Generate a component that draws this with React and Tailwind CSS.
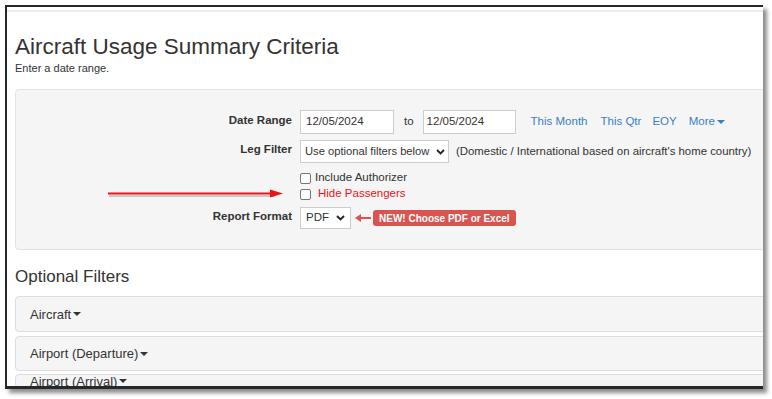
import React from 'react';

const font = { fontFamily: '"Liberation Sans", Arial, Helvetica, sans-serif' };

function Chevron() {
  return (
    <svg width="9" height="6" viewBox="0 0 9 6" className="shrink-0">
      <polyline points="1,1 4.5,4.5 8,1" fill="none" stroke="#222" strokeWidth="1.8" />
    </svg>
  );
}

function Caret() {
  return (
    <svg width="8" height="4" viewBox="0 0 8 4" className="inline-block ml-[2px]">
      <polygon points="0,0 8,0 4,4" fill="currentColor" />
    </svg>
  );
}

function Check({ label, red }) {
  return (
    <div className="flex items-center h-[16px]">
      <span className="w-[11px] h-[11px] border border-[#767676] rounded-[2px] bg-white" />
      <span className={red ? 'ml-[7px] text-[#e8141b]' : 'ml-[4px] text-[#333]'}>{label}</span>
    </div>
  );
}

function Row({ label, children, className = '' }) {
  return (
    <div className={`flex items-center ${className}`}>
      <div className="w-[284px] pr-[8px] text-right font-bold text-[#333] -mt-[3px]">{label}</div>
      <div className="flex items-center h-full">{children}</div>
    </div>
  );
}

function Panel({ title, className = '' }) {
  return (
    <div className={`w-[800px] bg-[#f5f5f5] border border-[#dddddd] rounded-[4px] pl-[14px] flex items-center text-[13px] leading-none text-[#333] ${className}`}>
      {title}
      <Caret />
    </div>
  );
}

export default function App() {
  return (
    <div className="w-[772px] h-[399px] bg-white relative overflow-hidden" style={font}>
      <div className="absolute left-[5px] top-[5px] w-[758px] h-[384px] border-t-2 border-l-2 border-b-[3px] border-[#26282b] bg-white overflow-hidden shadow-[4px_4px_4px_rgba(0,0,0,0.45)]">
        <div className="mt-[3px] h-[2px] bg-[#ebebeb]" />
        <div className="pl-[8px]">
          <h1 className="mt-[22px] text-[22.5px] leading-[26px] text-[#333]">Aircraft Usage Summary Criteria</h1>
          <p className="mt-[2px] text-[11px] leading-[13px] text-[#333]">Enter a date range.</p>

          {/* criteria well */}
          <div className="mt-[14px] w-[800px] bg-[#f5f5f5] border border-[#e3e3e3] rounded-[4px] pt-[20px] pb-[20px] text-[11.5px]">
            <Row label="Date Range" className="h-[24px]">
              <div className="w-[94px] h-[24px] bg-white border border-[#cccccc] flex items-center pl-[5px] text-[#333]">12/05/2024</div>
              <span className="ml-[10px] text-[#333]">to</span>
              <div className="ml-[9px] w-[93px] h-[24px] bg-white border border-[#cccccc] flex items-center pl-[3px] text-[#333]">12/05/2024</div>
              <span className="ml-[15px] text-[#3a7fc4]">This Month</span>
              <span className="ml-[13px] text-[#3a7fc4]">This Qtr</span>
              <span className="ml-[11px] text-[#3a7fc4]">EOY</span>
              <span className="ml-[12px] text-[#3a7fc4] flex items-center">More<Caret /></span>
            </Row>
            <Row label="Leg Filter" className="h-[23px] mt-[6px]">
              <div className="w-[149px] h-[23px] bg-white border border-[#cccccc] flex items-center justify-between pl-[4px] pr-[3px] text-[11.2px] text-[#333]">
                Use optional filters below
                <Chevron />
              </div>
              <span className="ml-[7px] text-[11.4px] text-[#333]">(Domestic / International based on aircraft's home country)</span>
            </Row>
            <div className="pl-[284px] mt-[7px]">
              <Check label="Include Authorizer" />
              <Check label="Hide Passengers" red />
            </div>
            <Row label="Report Format" className="h-[22px] mt-[5px]">
              <div className="w-[51px] h-[22px] bg-white border border-[#cccccc] flex items-center justify-between pl-[5px] pr-[5px] text-[#333]">
                PDF
                <Chevron />
              </div>
              <svg width="16" height="8" viewBox="0 0 16 8" className="ml-[4px]">
                <polygon points="0,4 6,0 6,8" fill="#d9534f" />
                <rect x="5" y="3" width="11" height="2" fill="#d9534f" />
              </svg>
              <span className="ml-[2px] h-[16px] px-[6px] rounded-[3px] bg-[#d9534f] text-white font-bold text-[10px] flex items-center">
                NEW! Choose PDF or Excel
              </span>
            </Row>
          </div>

          <h2 className="mt-[17px] text-[17px] leading-[20px] text-[#333]">Optional Filters</h2>
          <Panel title="Aircraft" className="mt-[9px] h-[36px]" />
          <Panel title="Airport (Departure)" className="mt-[4px] h-[35px]" />
          <Panel title="Airport (Arrival)" className="mt-[3px] h-[14px]" />
        </div>
      </div>

      {/* annotation arrow */}
      <svg className="absolute left-[104px] top-[186px]" width="184" height="16" viewBox="0 0 184 16">
        <line x1="4" y1="8" x2="170" y2="8" stroke="rgba(0,0,0,0.18)" strokeWidth="2" transform="translate(1,2)" />
        <line x1="4" y1="7.5" x2="168" y2="7.5" stroke="#e8141b" strokeWidth="2" />
        <polygon points="166,3.5 179,7.5 166,11.5" fill="#e8141b" />
      </svg>
    </div>
  );
}
